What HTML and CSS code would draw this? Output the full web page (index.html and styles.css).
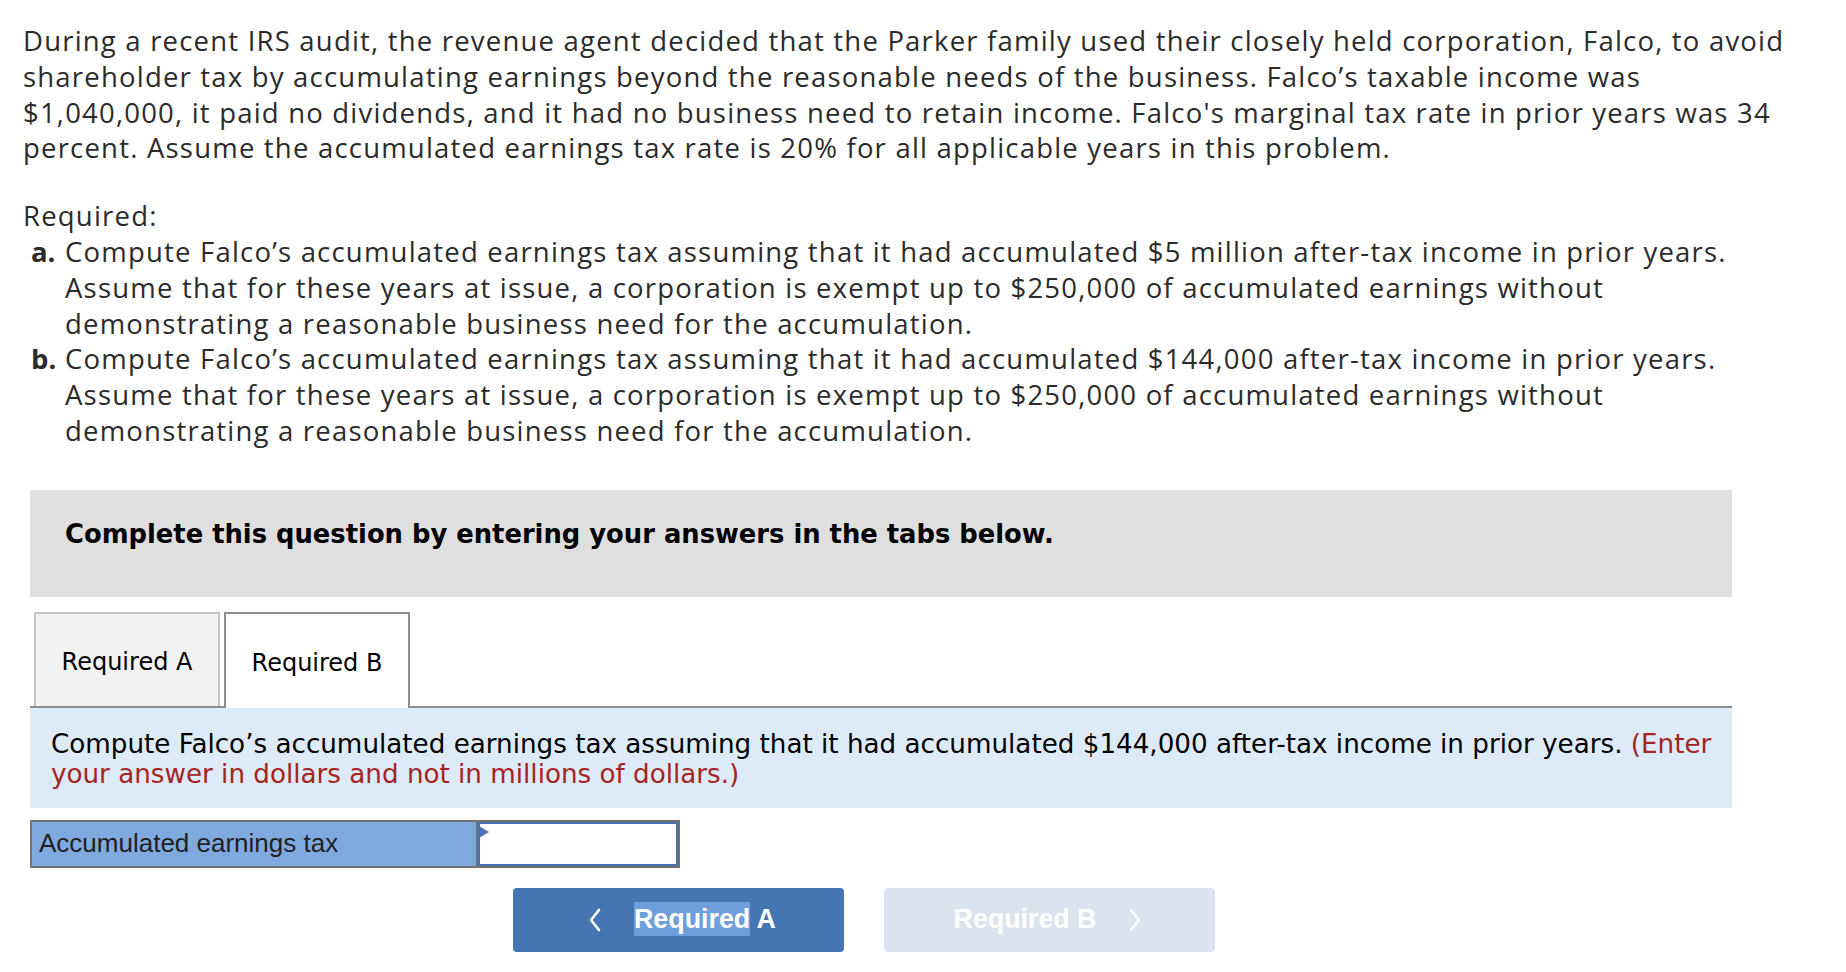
FILE: index.html
```html
<!DOCTYPE html>
<html lang="en">
<head>
<meta charset="utf-8">
<title>Accumulated earnings tax</title>
<link rel="stylesheet" href="styles.css">
</head>
<body>
<div class="page">
  <div class="problem">
    <p class="intro">During a recent IRS audit, the revenue agent decided that the Parker family used their closely held corporation, Falco, to avoid<br>shareholder tax by accumulating earnings beyond the reasonable needs of the business. Falco’s taxable income was<br>$1,040,000, it paid no dividends, and it had no business need to retain income. Falco's marginal tax rate in prior years was 34<br>percent. Assume the accumulated earnings tax rate is 20% for all applicable years in this problem.</p>
    <div class="required">
      <div class="req-title">Required:</div>
      <div class="req-item">
        <span class="req-label">a.</span>
        <span class="req-text">Compute Falco’s accumulated earnings tax assuming that it had accumulated $5 million after-tax income in prior years.<br>Assume that for these years at issue, a corporation is exempt up to $250,000 of accumulated earnings without<br>demonstrating a reasonable business need for the accumulation.</span>
      </div>
      <div class="req-item">
        <span class="req-label">b.</span>
        <span class="req-text">Compute Falco’s accumulated earnings tax assuming that it had accumulated $144,000 after-tax income in prior years.<br>Assume that for these years at issue, a corporation is exempt up to $250,000 of accumulated earnings without<br>demonstrating a reasonable business need for the accumulation.</span>
      </div>
    </div>
  </div>

  <div class="workspace">
    <div class="instructions">Complete this question by entering your answers in the tabs below.</div>

    <div class="tabs">
      <div class="tab">Required A</div>
      <div class="tab active">Required B</div>
    </div>

    <div class="prompt">Compute Falco’s accumulated earnings tax assuming that it had accumulated $144,000 after-tax income in prior years. <span class="note">(Enter<br>your answer in dollars and not in millions of dollars.)</span></div>

    <div class="answer-row">
      <div class="answer-label">Accumulated earnings tax</div>
      <div class="answer-input"></div>
    </div>

    <div class="nav">
      <div class="nav-btn prev">
        <svg class="chev" width="14" height="24" viewBox="0 0 14 24"><polyline points="11,2 3,12 11,22" fill="none" stroke="#ffffff" stroke-width="2.6" stroke-linecap="round" stroke-linejoin="round"/></svg>
        <span class="nav-text"><span class="selected">Required</span> A</span>
      </div>
      <div class="nav-btn next">
        <span class="nav-text">Required B</span>
        <svg class="chev" width="14" height="24" viewBox="0 0 14 24"><polyline points="3,2 11,12 3,22" fill="none" stroke="#ffffff" stroke-width="2.6" stroke-linecap="round" stroke-linejoin="round"/></svg>
      </div>
    </div>
  </div>
</div>
</body>
</html>
```

FILE: styles.css
```css
html, body {
  margin: 0;
  padding: 0;
  background: #ffffff;
}

.page {
  padding: 23px 0 0 23px;
}

.problem {
  font-family: "Open Sans", "Noto Sans", sans-serif;
  font-size: 27.5px;
  letter-spacing: 1.2px;
  line-height: 35.8px;
  color: #2b2b2b;
}

.intro {
  margin: 0 0 32px 0;
  white-space: nowrap;
}

.required {
  white-space: nowrap;
}

.req-item {
  display: grid;
  grid-template-columns: 34px auto;
  padding-left: 8px;
}

.req-label {
  font-weight: 700;
  letter-spacing: 0;
}

.workspace {
  margin: 41px 0 0 7px;
  width: 1702px;
}

.instructions {
  background: #dfdfdf;
  padding: 29px 35px 48px 35px;
  font-family: "DejaVu Sans", Verdana, sans-serif;
  font-weight: 700;
  font-size: 25.8px;
  line-height: 30px;
  color: #000000;
}

.tabs {
  display: flex;
  gap: 4px;
  margin-top: 15px;
  padding-left: 4px;
  height: 94px;
  border-bottom: 2px solid #8e8e8e;
}

.tab {
  width: 186px;
  box-sizing: border-box;
  padding-top: 4px;
  display: flex;
  align-items: center;
  justify-content: center;
  font-family: "DejaVu Sans", Verdana, sans-serif;
  font-size: 24px;
  color: #000000;
  background: #f2f2f2;
  border: 2px solid #c4c4c4;
  border-bottom: none;
}

.tab.active {
  background: #ffffff;
  border-color: #8e8e8e;
  height: 96px;
  margin-bottom: -2px;
}

.prompt {
  background: #ddebf8;
  padding: 21px 21px 18px 21px;
  font-family: "DejaVu Sans", Verdana, sans-serif;
  font-size: 26.2px;
  line-height: 30.6px;
  color: #000000;
  white-space: nowrap;
}

.note {
  color: #a6231f;
}

.answer-row {
  display: flex;
  width: 650px;
  height: 48px;
  box-sizing: border-box;
  margin-top: 12px;
  border: 2px solid #717171;
}

.answer-label {
  width: 446px;
  box-sizing: border-box;
  background: #80aadf;
  border-right: 2px solid #717171;
  padding-left: 7px;
  display: flex;
  align-items: center;
  font-family: "Liberation Sans", Arial, sans-serif;
  font-size: 26px;
  color: #1f1f1f;
}

.answer-input {
  flex: 1;
  position: relative;
  background: #ffffff;
  border: 2px solid #4a72b2;
}

.answer-input::before {
  content: "";
  position: absolute;
  left: -1px;
  top: 2px;
  border-top: 6px solid transparent;
  border-bottom: 6px solid transparent;
  border-left: 10px solid #4a72b2;
}

.nav {
  display: flex;
  gap: 40px;
  margin-top: 20px;
  padding-left: 483px;
}

.nav-btn {
  width: 331px;
  height: 64px;
  box-sizing: border-box;
  border-radius: 4px;
  display: flex;
  align-items: center;
  justify-content: center;
  gap: 32px;
  font-family: "Liberation Sans", Arial, sans-serif;
  font-weight: 700;
  font-size: 26.8px;
  color: #ffffff;
}

.nav-btn.prev {
  background: #4675b3;
  padding-left: 7px;
}

.nav-btn.next {
  background: #dae3ef;
  padding-right: 3px;
}

.chev {
  display: block;
}

.selected {
  background: #6f9edc;
  padding: 2px 0;
}
```
